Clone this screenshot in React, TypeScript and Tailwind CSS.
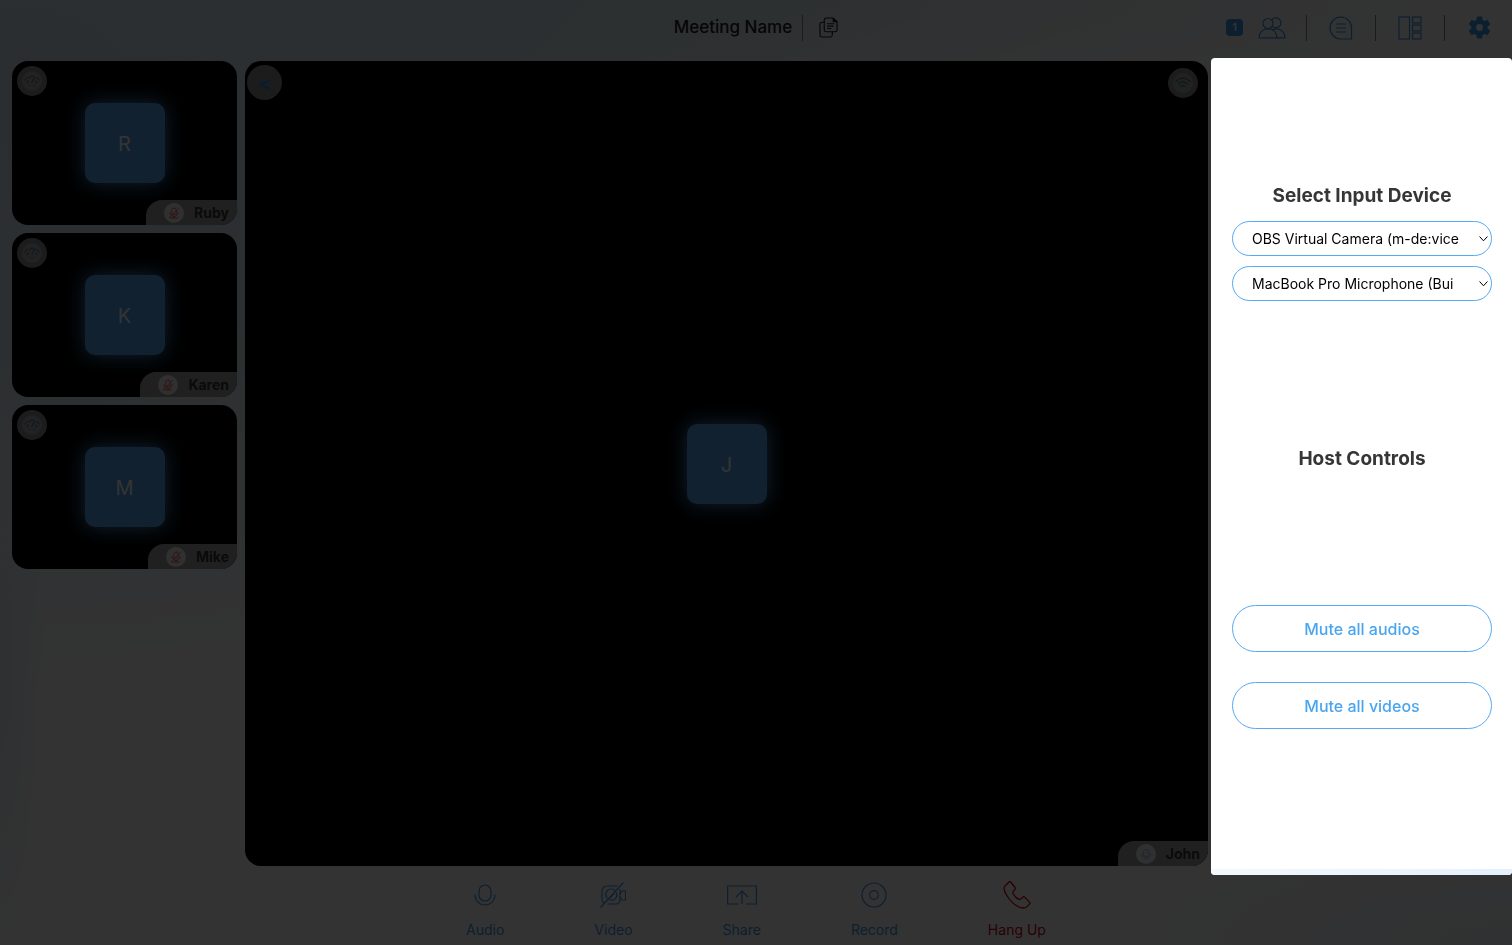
import React from "react";

type IconProps = { className?: string };

const stroke = {
  fill: "none",
  stroke: "currentColor",
  strokeLinecap: "round" as const,
  strokeLinejoin: "round" as const,
};

function CopyIcon() {
  return (
    <svg width="19" height="21" viewBox="0 0 20 22" {...stroke} strokeWidth="1.2" aria-hidden="true">
      <path d="M7.500 1h7L19 5v8.500a2 2 0 0 1-2 2H7.500a2 2 0 0 1-2-2V3a2 2 0 0 1 2-2Z" />
      <path d="M15 1.500V5h3.500Z" fill="currentColor" />
      <path d="M5.500 5.500H3a2 2 0 0 0-2 2V19a2 2 0 0 0 2 2h9a2 2 0 0 0 2-2v-3.500M9 7h6.500M9 9.500h6M9 12h3.500" />
    </svg>
  );
}

function PeopleIcon() {
  return (
    <svg width="28" height="22" viewBox="0 0 28 22" {...stroke} strokeWidth="1.2" aria-hidden="true">
      <circle cx="10" cy="6.500" r="5" />
      <path d="M13.700 3.100a5 5 0 1 1 .6 6.200" />
      <path d="M1 20.800c0-5.300 3.500-9 9-9s9 3.700 9 9Z" />
      <path d="M14.500 12.600c1.200-.5 2.500-.8 4-.8 5 0 8.500 3.700 8.500 9h-8" />
    </svg>
  );
}

function ChatIcon() {
  return (
    <svg width="24" height="24" viewBox="0 0 24 24" {...stroke} strokeWidth="1.2" aria-hidden="true">
      <path d="M12 1a11 11 0 0 0 0 22h10.500V12A10.700 10.700 0 0 0 12 1Z" />
      <path d="M7.500 8h9M7.500 12h9M7.500 16h9" />
    </svg>
  );
}

function LayoutIcon() {
  return (
    <svg width="24" height="24" viewBox="0 0 24 24" fill="none" stroke="currentColor" strokeWidth="1.2" aria-hidden="true">
      <rect x="1" y="1" width="10.500" height="22" />
      <rect x="14.500" y="1" width="8.500" height="6" />
      <rect x="14.500" y="9" width="8.500" height="6" />
      <rect x="14.500" y="17" width="8.500" height="6" />
    </svg>
  );
}

function GearIcon() {
  return (
    <svg width="25" height="25" viewBox="1 1 22 22" fill="currentColor" aria-hidden="true">
      <path d="M19.140 12.940c.04-.3.060-.61.060-.94 0-.32-.02-.64-.07-.94l2.030-1.580c.18-.14.23-.41.120-.61l-1.920-3.320c-.12-.22-.37-.29-.59-.22l-2.390.96c-.5-.38-1.030-.7-1.620-.94l-.36-2.540c-.04-.24-.24-.41-.48-.41h-3.840c-.24 0-.43.17-.47.41l-.36 2.540c-.59.24-1.130.57-1.620.94l-2.390-.96c-.22-.08-.47 0-.59.22L2.740 8.870c-.12.21-.08.47.12.61l2.030 1.580c-.05.3-.09.63-.09.940s.02.64.07.94l-2.030 1.580c-.18.14-.23.41-.12.610l1.920 3.320c.12.22.37.290.59.22l2.390-.96c.5.38 1.030.7 1.620.94l.36 2.540c.05.24.24.41.48.41h3.840c.24 0 .44-.17.47-.41l.36-2.540c.59-.24 1.130-.56 1.620-.94l2.390.96c.22.08.47 0 .59-.22l1.920-3.320c.12-.22.070-.47-.12-.61l-2.010-1.580ZM12 15a3 3 0 1 1 0-6 3 3 0 0 1 0 6Z" />
    </svg>
  );
}

function MicIcon({ className }: IconProps) {
  return (
    <svg className={className} viewBox="0 0 22 22" {...stroke} strokeWidth="1.2" aria-hidden="true">
      <rect x="5" y="1" width="12" height="16" rx="6" />
      <path d="M1 11a10 10 0 0 0 20 0" />
    </svg>
  );
}

function MicOffIcon({ className }: IconProps) {
  return (
    <svg className={className} viewBox="0 0 24 24" {...stroke} strokeWidth="1.5" aria-hidden="true">
      <rect x="7.500" y="2" width="9" height="14" rx="4.500" />
      <path d="M4 11c0 5 3.500 8 8 8s8-3 8-8M12 19v3M5 22h14M22 2 2 22" />
    </svg>
  );
}

function VideoOffIcon() {
  return (
    <svg width="26" height="26" viewBox="0 0 26 26" {...stroke} strokeWidth="1.200" aria-hidden="true">
      <path d="M17 4H7a5 5 0 0 0-5 5v8c0 2 .8 3.500 2 4.300M8 22h8a4 4 0 0 0 4-4V7.500" />
      <path d="M15.500 9a5.300 5.300 0 0 0-8.500 7M10 18a5.300 5.300 0 0 0 6.500-7" />
      <path d="M14 11.500l-4 4.500M20 12l2-3h3.500v9H22l-2-3M23 1 1 25" />
    </svg>
  );
}

function ShareIcon() {
  return (
    <svg width="30" height="20" viewBox="0 0 30 20" fill="none" stroke="currentColor" strokeWidth="1.200" aria-hidden="true">
      <path d="M11.500 19H.6V1h28.800v18H19M15 19V6M9 12l6-6 6 6" />
    </svg>
  );
}

function RecordIcon() {
  return (
    <svg width="26" height="26" viewBox="0 0 26 26" fill="none" stroke="currentColor" strokeWidth="1.200" aria-hidden="true">
      <circle cx="13" cy="13" r="12" />
      <circle cx="13" cy="13" r="4.300" />
    </svg>
  );
}

function PhoneIcon() {
  return (
    <svg width="28" height="28" viewBox="0 0 28 28" {...stroke} strokeWidth="1.300" aria-hidden="true">
      <path d="M6 1 1.800 5.200C.6 6.800 1 10 3.500 14c4 6.500 10.500 12.500 17 13 1.500 0 2.500-.4 3.500-1.400l2.500-2.500c.7-.7.7-1.300 0-2l-4.800-5c-.6-.6-1.200-.6-1.800 0-1 1-2 2.500-3.500 2.200-2.500-.6-6-4.200-6.500-6.500-.3-1.500 1-2.300 2.200-3.500.6-.6.6-1.200 0-1.800L7.700 1c-.5-.5-1.200-.5-1.700 0Z" />
    </svg>
  );
}

function WifiBadge({ good = false }: { good?: boolean }) {
  return (
    <span className="flex size-[30px] items-center justify-center rounded-full bg-[#8c8c8c]">
      <span className={good ? "flex size-5 items-center justify-center rounded-full bg-[#a8a8a8] text-[#3a8a3a]" : "flex size-5 items-center justify-center rounded-full bg-[#a8a8a8] text-[#4a78a0]"}>
        {good ? (
          <svg width="16" height="12" viewBox="0 0 16 12" {...stroke} strokeWidth="1.300" aria-hidden="true">
            <path d="M1 4.500c4-4.500 10-4.500 14 0M3.500 7c2.800-2.800 6.200-2.800 9 0M6 9.500c1.300-1.200 2.700-1.200 4 0" />
          </svg>
        ) : (
          <svg width="16" height="12" viewBox="0 0 16 12" {...stroke} strokeWidth="1.200" aria-hidden="true">
            <path d="M.8 5C1.600 3.800 2.600 2.900 3.800 2.300M12.200 2.300c1.200.6 2.200 1.500 3 2.700M3 7.500l1.500-1.300M13 7.500l-1.500-1.300M6 3c.3-2.600 4.300-2.400 4.200 0C10.100 5 8 5 8 7.500M8 10.500v.1M5.500 10.500v.1M10.500 10.500v.1" />
          </svg>
        )}
      </span>
    </span>
  );
}

function Avatar({ name }: { name: string }) {
  return (
    <div className="flex size-20 items-center justify-center rounded-[10px] bg-[#55a5f0] pt-0.5 text-xl text-[#ffffff] shadow-[0_0_20px_#55a5f0]">
      {name[0]}
    </div>
  );
}

function NameTag({ name, muted }: { name: string; muted: boolean }) {
  return (
    <div className="absolute right-0 bottom-0 flex h-[25px] items-center gap-2.5 rounded-tl-2xl bg-[#a0a0a0] pr-2 pl-[18px] text-sm font-bold text-[#363636]">
      <span className={muted ? "flex size-5 items-center justify-center rounded-full bg-[#f0f0f0] text-[#e0483c]" : "flex size-5 items-center justify-center rounded-full bg-[#f0f0f0] text-[#3f9bea]"}>
        {muted ? <MicOffIcon className="size-3" /> : <MicIcon className="size-2.5" />}
      </span>
      {name}
    </div>
  );
}

function Tile({ name }: { name: string }) {
  return (
    <li className="relative flex h-[164px] items-center justify-center overflow-hidden rounded-2xl bg-black">
      <div className="absolute top-[5px] left-[5px]">
        <WifiBadge />
      </div>
      <Avatar name={name} />
      <NameTag name={name} muted />
    </li>
  );
}

const controls = [
  { label: "Audio", icon: <MicIcon className="size-[22px]" />, danger: false },
  { label: "Video", icon: <VideoOffIcon />, danger: false },
  { label: "Share", icon: <ShareIcon />, danger: false },
  { label: "Record", icon: <RecordIcon />, danger: false },
  { label: "Hang Up", icon: <PhoneIcon />, danger: true },
];

function Divider() {
  return <span className="h-[26px] w-px bg-[#888888]" />;
}

function DeviceSelect({ id, label, value }: { id: string; label: string; value: string }) {
  return (
    <div className="relative">
      <label htmlFor={id} className="sr-only">
        {label}
      </label>
      <select id={id} className="block h-[35px] w-full appearance-none overflow-hidden rounded-full border border-[#55a9f5] bg-white pr-[31px] pl-[19px] text-sm text-black">
        <option>{value}</option>
      </select>
      <svg className="pointer-events-none absolute top-[15px] right-1" width="9" height="6" viewBox="0 0 9 6" {...stroke} strokeWidth="1" aria-hidden="true">
        <path d="m.8.8 3.700 4 3.700-4" />
      </svg>
    </div>
  );
}

function SettingsPanel() {
  const button = "h-[47px] w-full rounded-full border border-[#55a9f5] text-base font-medium text-[#4aa5f0]";
  const heading = "text-center text-[19px] leading-[30px] font-bold text-[#363636]";
  return (
    <aside aria-label="Settings" className="fixed top-[58px] right-0 bottom-[70px] flex w-[301px] flex-col overflow-hidden rounded bg-white pt-[123px] pr-5 pl-[21px]">
      <h2 className={heading}>Select Input Device</h2>
      <div className="mt-2.5 flex flex-col gap-2.5">
        <DeviceSelect id="camera" label="Camera" value="OBS Virtual Camera (m-de:vice" />
        <DeviceSelect id="microphone" label="Microphone" value="MacBook Pro Microphone (Bui" />
      </div>
      <div className="mt-[143px]">
        <h2 className={heading}>Host Controls</h2>
      </div>
      <div className="mt-[131px] flex flex-col gap-[30px]">
        <button type="button" className={button}>Mute all audios</button>
        <button type="button" className={button}>Mute all videos</button>
      </div>
      <div className="-mr-5 mt-auto -ml-[21px] h-1.5 shrink-0 bg-linear-to-r from-[#f3f8fd] to-[#e3f1fc]" />
    </aside>
  );
}

export default function App() {
  return (
    <div className="font-[Inter,sans-serif]">
      <div className="flex min-h-screen flex-col bg-white bg-[radial-gradient(ellipse_70%_65%_at_0%_8%,#d3e6f1_0%,#d9eaf4_40%,#ffffff00_100%),radial-gradient(ellipse_50%_12%_at_50%_0%,#e4f0f6_0%,#ffffff00_100%),radial-gradient(ellipse_3%_30%_at_0%_72%,#e2edf5_0%,#ffffff00_100%),radial-gradient(ellipse_30%_14%_at_100%_100%,#f0f5fa_0%,#ffffff00_100%)]">
        <header className="grid h-[61px] grid-cols-[1fr_auto_1fr] items-center px-5 pb-1.5">
          <div />
          <div className="flex items-center gap-2.5">
            <h1 className="text-[17px] font-medium text-[#202020]">Meeting Name</h1>
            <Divider />
            <button type="button" aria-label="Copy meeting link" className="ml-1.5 text-[#202020]">
              <CopyIcon />
            </button>
          </div>
          <nav aria-label="Meeting tools" className="flex items-center justify-end gap-[22px] text-[#3f9bea]">
            <button type="button" aria-label="Participants" className="-mr-0.5 flex items-center gap-[15px]">
              <span className="flex size-[17px] items-center justify-center rounded-sm bg-[#3f9bea] text-[11px] font-semibold text-white">1</span>
              <PeopleIcon />
            </button>
            <Divider />
            <button type="button" aria-label="Chat"><ChatIcon /></button>
            <Divider />
            <button type="button" aria-label="Layout"><LayoutIcon /></button>
            <Divider />
            <button type="button" aria-label="Settings"><GearIcon /></button>
          </nav>
        </header>

        <main className="flex grow gap-2 pl-3">
          <ul className="flex w-[225px] shrink-0 flex-col gap-2">
            <Tile name="Ruby" />
            <Tile name="Karen" />
            <Tile name="Mike" />
          </ul>
          <section aria-label="Active speaker" className="relative mr-[304px] flex grow items-center justify-center overflow-hidden rounded-2xl bg-black">
            <button type="button" aria-label="Collapse participants" className="absolute top-1 left-[2px] flex size-[35px] items-center justify-center rounded-full bg-[#8c8c8c] pt-1 text-[#1f8ff5]">
              <svg width="12" height="11" viewBox="0 0 12 11" fill="none" stroke="currentColor" strokeWidth="2" aria-hidden="true">
                <path d="M11.500 1 1.500 5.500l10 4.500" />
              </svg>
            </button>
            <div className="absolute top-[7px] right-2.5">
              <WifiBadge good />
            </div>
            <Avatar name="John" />
            <NameTag name="John" muted={false} />
          </section>
        </main>

        <footer className="flex h-[79px] items-start justify-center gap-[90px] pt-3.5">
          {controls.map((c) => (
            <button key={c.label} type="button" className={c.danger ? "flex flex-col items-center gap-2.5 text-sm text-[#d0021b]" : "flex flex-col items-center gap-2.5 text-sm text-[#3f9bea]"}>
              <span className="flex h-[30px] items-center">{c.icon}</span>
              {c.label}
            </button>
          ))}
        </footer>
      </div>
      <div className="pointer-events-none fixed inset-0 bg-black/80" />
      <SettingsPanel />
    </div>
  );
}
